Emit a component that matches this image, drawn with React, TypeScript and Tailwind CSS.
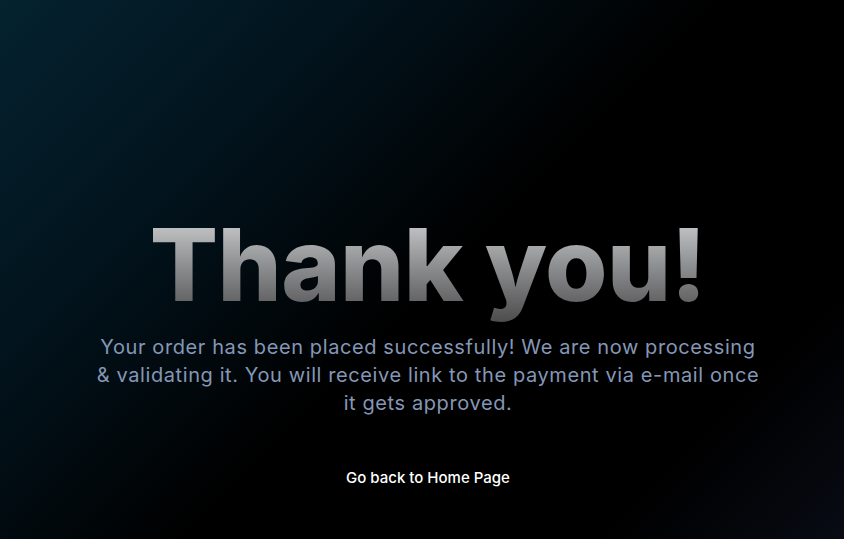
export default function App() {
  return (
    <main className="relative flex h-[539px] w-full flex-col items-center overflow-hidden bg-[linear-gradient(135deg,#04222f_0%,#02141e_25%,#000000_52%,#000000_82%,#080b14_100%)] pl-[12px] font-['Inter',sans-serif]">
      <div className="flex flex-col items-center pt-[204px] text-center">
        <h1 className="bg-gradient-to-b from-[#dcdee0] to-[#4b4b4c] bg-clip-text text-[101px] font-extrabold leading-[120px] tracking-[-0.5px] text-transparent">
          Thank you!
        </h1>
        <p className="mt-[9px] max-w-[666px] text-[20px] leading-[28px] tracking-[0.6px] text-[#8597b6]">
          Your order has been placed successfully! We are now processing &amp; validating it. You will receive link to the payment via e-mail once it gets approved.
        </p>
        <a href="#" className="mt-[50px] text-[15px] font-medium text-white">
          Go back to Home Page
        </a>
      </div>
    </main>
  );
}
